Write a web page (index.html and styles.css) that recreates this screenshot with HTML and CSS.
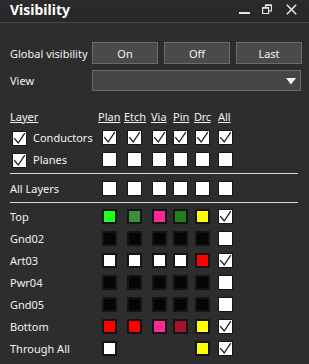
FILE: index.html
```html
<!DOCTYPE html>
<html>
<head>
<meta charset="utf-8">
<title>Visibility</title>
<link rel="stylesheet" href="styles.css">
</head>
<body>
<svg class="defs" width="0" height="0" aria-hidden="true">
  <symbol id="chk" viewBox="0 0 13 13"><path d="M1.2 6.2 L5.2 11 L11.8 1.2" fill="none" stroke="#1c1c1c" stroke-width="1.3" stroke-linejoin="miter"/></symbol>
</svg>
<div class="panel">
  <div class="titlebar">
    <span class="title">Visibility</span>
    <div class="wincontrols">
      <svg class="ic ic-min" width="11" height="11" viewBox="0 0 11 11"><rect x="0" y="8" width="11" height="2" fill="#e6e6e6"/></svg>
      <svg class="ic ic-restore" width="10" height="10" viewBox="0 0 10 10"><path d="M3.5 3 V1 H9.5 V7 H7" fill="none" stroke="#e6e6e6" stroke-width="1.2"/><rect x="3.5" y="0.5" width="6" height="1.5" fill="#e6e6e6"/><rect x="0.6" y="3.6" width="6" height="6" fill="none" stroke="#e6e6e6" stroke-width="1.2"/><rect x="0.6" y="3.2" width="6" height="1.5" fill="#e6e6e6"/></svg>
      <svg class="ic ic-close" width="11" height="11" viewBox="0 0 11 11"><path d="M0.8 0.8 L10.2 10.2 M10.2 0.8 L0.8 10.2" stroke="#e6e6e6" stroke-width="1.5"/></svg>
    </div>
  </div>

  <div class="content">
    <div class="frow">
      <span class="flabel">Global visibility</span>
      <div class="btns">
        <button class="btn">On</button>
        <button class="btn">Off</button>
        <button class="btn">Last</button>
      </div>
    </div>
    <div class="frow view">
      <span class="flabel">View</span>
      <div class="select">
        <svg class="tri" width="10" height="7" viewBox="0 0 10 7"><path d="M0 0 H10 L5 6.5 Z" fill="#f2f2f2"/></svg>
      </div>
    </div>

    <div class="grid">
      <span class="lbl hdr"><u>Layer</u></span>
      <span class="hc h-plan"><u>Plan</u></span>
      <span class="hc h-etch"><u>Etch</u></span>
      <span class="hc h-via"><u>Via</u></span>
      <span class="hc h-pin"><u>Pin</u></span>
      <span class="hc h-drc"><u>Drc</u></span>
      <span class="hc h-all"><u>All</u></span>

      <span class="lbl withcb"><span class="cb"><svg><use href="#chk"/></svg></span>Conductors</span>
      <span class="cb"><svg><use href="#chk"/></svg></span>
      <span class="cb"><svg><use href="#chk"/></svg></span>
      <span class="cb"><svg><use href="#chk"/></svg></span>
      <span class="cb"><svg><use href="#chk"/></svg></span>
      <span class="cb"><svg><use href="#chk"/></svg></span>
      <span class="cb"><svg><use href="#chk"/></svg></span>

      <span class="lbl withcb"><span class="cb"><svg><use href="#chk"/></svg></span>Planes</span>
      <span class="cb"></span>
      <span class="cb"></span>
      <span class="cb"></span>
      <span class="cb"></span>
      <span class="cb"></span>
      <span class="cb"></span>

      <div class="sep"></div>

      <span class="lbl">All Layers</span>
      <span class="cb"></span>
      <span class="cb"></span>
      <span class="cb"></span>
      <span class="cb"></span>
      <span class="cb"></span>
      <span class="cb"></span>

      <div class="sep"></div>

      <span class="lbl">Top</span>
      <span class="sw c-lime"></span>
      <span class="sw c-green"></span>
      <span class="sw c-pink"></span>
      <span class="sw c-dkgreen"></span>
      <span class="sw c-yellow"></span>
      <span class="cb"><svg><use href="#chk"/></svg></span>

      <span class="lbl">Gnd02</span>
      <span class="sw c-black"></span>
      <span class="sw c-black"></span>
      <span class="sw c-black"></span>
      <span class="sw c-black"></span>
      <span class="sw c-black"></span>
      <span class="cb"></span>

      <span class="lbl">Art03</span>
      <span class="sw c-white"></span>
      <span class="sw c-white"></span>
      <span class="sw c-white"></span>
      <span class="sw c-white"></span>
      <span class="sw c-red"></span>
      <span class="cb"><svg><use href="#chk"/></svg></span>

      <span class="lbl">Pwr04</span>
      <span class="sw c-black"></span>
      <span class="sw c-black"></span>
      <span class="sw c-black"></span>
      <span class="sw c-black"></span>
      <span class="sw c-black"></span>
      <span class="cb"></span>

      <span class="lbl">Gnd05</span>
      <span class="sw c-black"></span>
      <span class="sw c-black"></span>
      <span class="sw c-black"></span>
      <span class="sw c-black"></span>
      <span class="sw c-black"></span>
      <span class="cb"></span>

      <span class="lbl">Bottom</span>
      <span class="sw c-red"></span>
      <span class="sw c-red"></span>
      <span class="sw c-pink"></span>
      <span class="sw c-maroon"></span>
      <span class="sw c-yellow"></span>
      <span class="cb"><svg><use href="#chk"/></svg></span>

      <span class="lbl">Through All</span>
      <span class="sw c-white"></span>
      <span></span>
      <span></span>
      <span></span>
      <span class="sw c-yellow"></span>
      <span class="cb"><svg><use href="#chk"/></svg></span>
    </div>
  </div>
</div>
</body>
</html>
```

FILE: styles.css
```css
* { box-sizing: border-box; }
html, body { margin: 0; padding: 0; }
body {
  background: #2d2d2d;
  color: #f2f2f2;
  font-family: "Noto Sans", "Open Sans", sans-serif;
  font-size: 11px;
  width: 309px;
  height: 364px;
  overflow: hidden;
}
.defs { position: absolute; width: 0; height: 0; overflow: hidden; }

.titlebar {
  height: 23px;
  border-bottom: 1px solid #4a4a4a;
  background: linear-gradient(#2b2b2b, #272727);
  display: flex;
  align-items: flex-start;
  padding-left: 10px;
}
.title {
  font-weight: 700;
  font-size: 14px;
  line-height: 20px;
  color: #ffffff;
}
.wincontrols {
  margin-left: auto;
  display: flex;
  align-items: flex-start;
  padding-right: 12px;
}
.ic { display: block; }
.ic-min { margin-top: 4px; }
.ic-restore { margin-top: 4px; margin-left: 12px; }
.ic-close { margin-top: 4px; margin-left: 14px; }

.content { padding-top: 19px; }

.frow {
  display: flex;
  align-items: center;
  padding-left: 10px;
  height: 22px;
}
.frow.view { margin-top: 6px; height: 21px; }
.flabel { width: 82px; flex: none; }
.btns { display: flex; gap: 6px; }
.btn {
  width: 66px;
  height: 22px;
  margin: 0;
  padding: 0;
  background: #4a4a4a;
  border: 1px solid #6b6b6b;
  border-radius: 0;
  color: #f2f2f2;
  font: inherit;
  font-size: 11px;
}
.select {
  width: 209px;
  height: 21px;
  background: #454545;
  border: 1px solid #6a6a6a;
  display: flex;
  align-items: center;
  justify-content: flex-end;
  padding-right: 4px;
}
.tri { display: block; margin-top: 1px; }

.grid {
  margin-top: 17px;
  margin-left: 10px;
  width: 288px;
  display: grid;
  grid-template-columns: 92px 25px 25px 21px 22px 23px 15px 1fr;
  grid-template-rows: 19px 22px 22px 7px 22px 6px repeat(7, 22px);
  align-items: start;
}
.lbl {
  grid-column: 1;
  line-height: 22px;
  white-space: nowrap;
}
.lbl.hdr { line-height: 16px; margin-top: 1px; }
.hc {
  line-height: 16px;
  margin-top: 1px;
  white-space: nowrap;
}
.h-plan { margin-left: -4px; }
.h-etch { margin-left: -3px; }
.h-via { margin-left: -1px; }
.h-pin { margin-left: 0; }
.h-drc { margin-left: -1px; letter-spacing: -0.3px; }
.h-all { margin-left: 0; }
u { text-decoration: underline; text-decoration-thickness: 1px; }
.withcb {
  display: flex;
  align-items: center;
  gap: 6px;
  padding-left: 2px;
}
.cb {
  display: block;
  width: 15px;
  height: 15px;
  margin-top: 3px;
  background: #ffffff;
  border: 1px solid #151515;
  flex: none;
}
.withcb .cb { margin-top: 0; }
.cb svg { display: block; width: 13px; height: 13px; }
.sw {
  display: block;
  width: 15px;
  height: 15px;
  margin-top: 3px;
  border: 2px solid #141414;
}
.sep {
  grid-column: 1 / -1;
  height: 1px;
  margin-top: 2px;
  background: #dcdcdc;
}
.c-lime { background: #22ff22; }
.c-green { background: #3a8f3a; }
.c-pink { background: #ff2a8f; }
.c-dkgreen { background: #217f1d; }
.c-yellow { background: #ffff00; }
.c-black { background: #050505; }
.c-white { background: #ffffff; }
.c-red { background: #ff0000; }
.c-maroon { background: #a6132a; }
```
